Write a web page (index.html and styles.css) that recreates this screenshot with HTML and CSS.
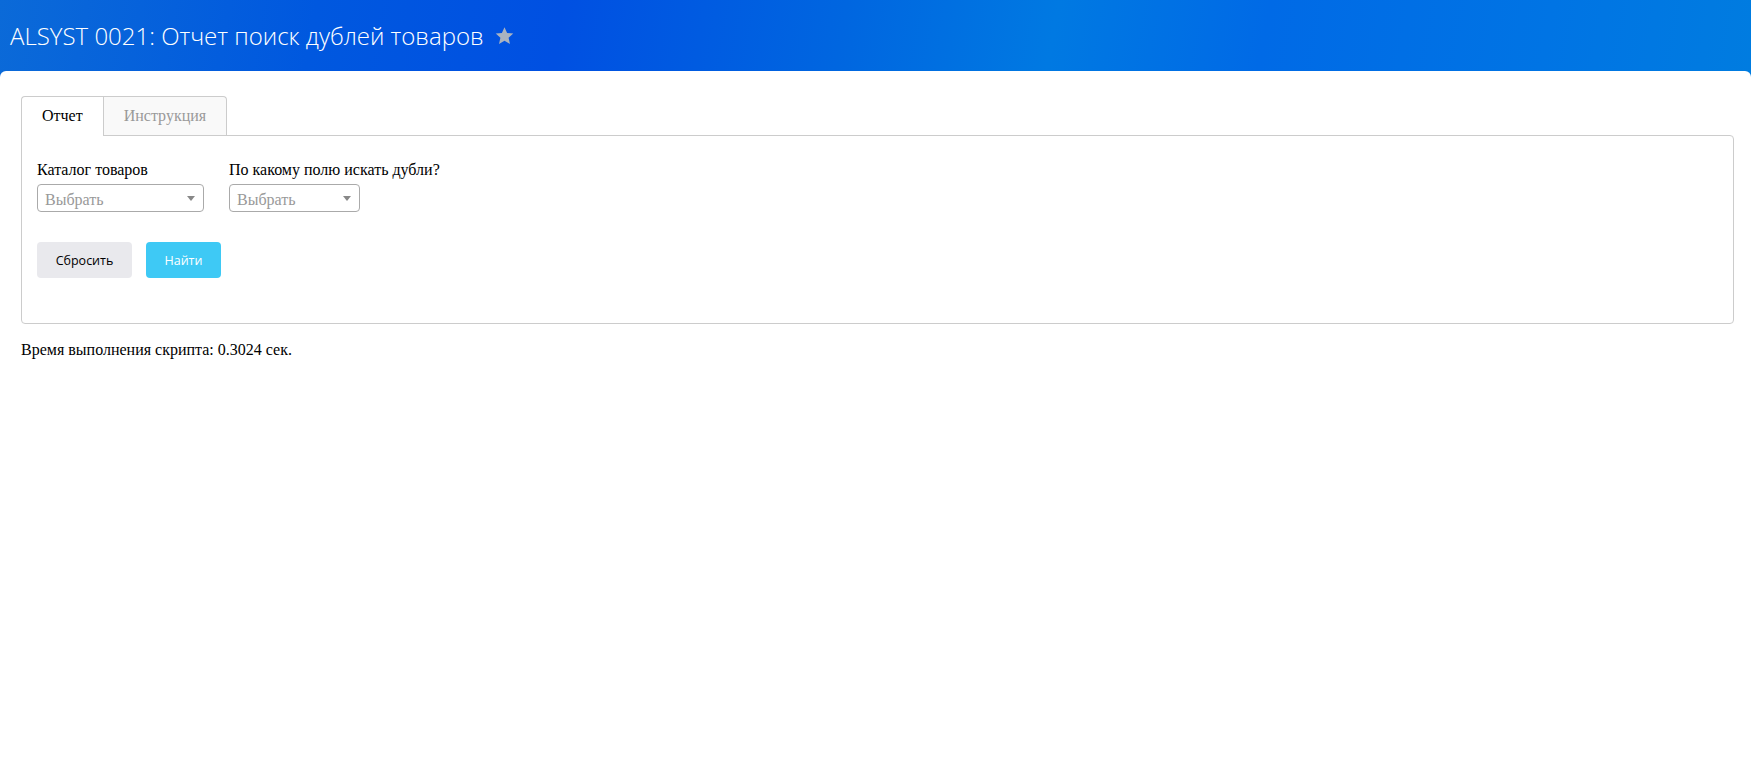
FILE: index.html
```html
<!DOCTYPE html>
<html lang="ru">
<head>
<meta charset="utf-8">
<title>ALSYST 0021</title>
<link rel="stylesheet" href="styles.css">
</head>
<body>
<div class="page">
  <header class="topbar">
    <h1 class="title">ALSYST 0021: Отчет поиск дублей товаров</h1>
    <svg class="star" viewBox="0 0 24 24" width="21" height="20" aria-hidden="true"><path d="M12 1.5l3.1 6.9 7.4.7-5.6 5 1.7 7.4L12 17.6l-6.6 3.9 1.7-7.4-5.6-5 7.4-.7z"/></svg>
  </header>
  <main class="content">
    <nav class="tabs">
      <div class="tab active">Отчет</div>
      <div class="tab">Инструкция</div>
    </nav>
    <section class="panel">
      <div class="fields">
        <div class="field">
          <label class="label">Каталог товаров</label>
          <div class="select wide"><span class="placeholder">Выбрать</span><span class="arrow"></span></div>
        </div>
        <div class="field">
          <label class="label">По какому полю искать дубли?</label>
          <div class="select narrow"><span class="placeholder">Выбрать</span><span class="arrow"></span></div>
        </div>
      </div>
      <div class="actions">
        <button class="btn btn-reset">Сбросить</button>
        <button class="btn btn-find">Найти</button>
      </div>
    </section>
    <p class="timing">Время выполнения скрипта: 0.3024 сек.</p>
  </main>
</div>
</body>
</html>
```

FILE: styles.css
```css
html, body {
  margin: 0;
  padding: 0;
  background: #fff;
}
body {
  font-family: "Liberation Serif", "Times New Roman", serif;
  font-size: 16px;
  color: #000;
}
.page {
  min-height: 762px;
  background:
    linear-gradient(100deg, #0b6ad8 0%, #0058df 18%, #0050e2 32%, #0066e0 48%, #0079e2 60%, #006ae6 72%, #0074e4 88%, #007ce0 100%) top left / 100% 80px no-repeat,
    #fff;
}
.topbar {
  height: 71px;
  display: flex;
  align-items: center;
  padding-left: 10px;
  box-sizing: border-box;
}
.title {
  margin: 0;
  font-family: "Open Sans", "Noto Sans", sans-serif;
  font-weight: 300;
  font-size: 24px;
  color: #fff;
  letter-spacing: 0;
  line-height: 1;
}
.star {
  margin-left: 10px;
  fill: #aab3c0;
}
.content {
  background: #fff;
  border-radius: 6px 6px 0 0;
  padding: 25px 17px 20px 21px;
}
.tabs {
  display: flex;
}
.tab {
  padding: 10px 20px 10px 20px;
  border: 1px solid #ccc;
  border-bottom: none;
  background: #f9f9f9;
  color: #999;
  line-height: 18px;
  height: 39px;
  box-sizing: border-box;
  border-radius: 0 4px 0 0;
}
.tab.active {
  background: #fff;
  color: #000;
  border-right: none;
  border-radius: 4px 0 0 0;
  position: relative;
  z-index: 1;
  height: 40px;
  margin-bottom: -1px;
}
.panel {
  border: 1px solid #ccc;
  border-radius: 0 4px 4px 4px;
  padding: 25px 15px 45px 15px;
}
.fields {
  display: flex;
  gap: 25px;
}
.field {
  display: flex;
  flex-direction: column;
  gap: 5px;
}
.label {
  line-height: 18px;
}
.select {
  height: 28px;
  box-sizing: border-box;
  border: 1px solid #aaa;
  border-radius: 4px;
  display: flex;
  align-items: center;
  justify-content: space-between;
  padding: 0 7px 0 7px;
}
.select.wide { width: 167px; }
.select.narrow { width: 131px; }
.placeholder {
  color: #999;
  padding-top: 4px;
}
.arrow {
  width: 0;
  height: 0;
  border-left: 4px solid transparent;
  border-right: 4px solid transparent;
  border-top: 5px solid #888;
  margin-right: 1px;
}
.actions {
  display: flex;
  gap: 14px;
  margin-top: 30px;
}
.btn {
  height: 36px;
  border: none;
  border-radius: 4px;
  font-family: "Open Sans", "Noto Sans", sans-serif;
  font-size: 12.5px;
  padding: 0;
  cursor: pointer;
}
.btn-reset {
  width: 95px;
  background: #e9e9ed;
  color: #000;
}
.btn-find {
  width: 75px;
  background: #3ec9f5;
  color: #fff;
}
.timing {
  margin: 17px 0 0 0;
  line-height: 18px;
}
```
